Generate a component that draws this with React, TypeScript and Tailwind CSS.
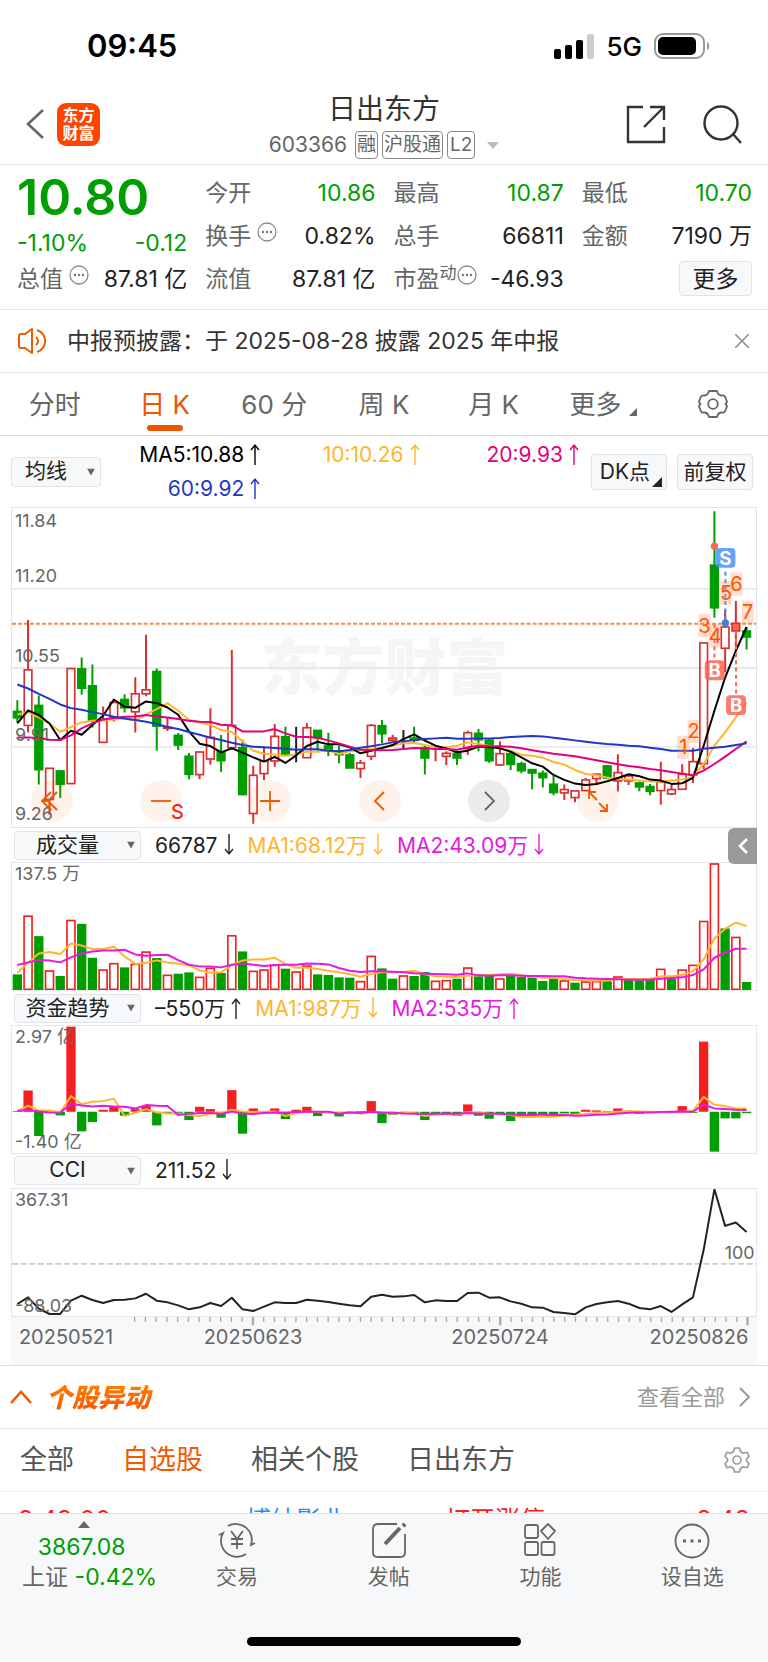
import { useState } from "react";
import type { ReactNode } from "react";

// Every chart shares one horizontal scale: 69 trading days, 3 units to a pixel.
const STEP = 32.26;
const CHART_LEFT = 34;
const CHART_WIDTH = 2238;
const dayX = (i: number) => 50 + i * STEP;

const toPoints = (values: number[]) => values.map((y, i) => `${dayX(i)},${y}`).join(" ");

type CandleKind = "up" | "down" | "flat" | "solid";
type Candle = [CandleKind, number, number, number, number];

// kind, high, low, body top, body bottom
const candles: Candle[] = [
    ["down", 598, 665, 631, 652],
    ["up", 357, 695, 506, 675],
    ["down", 584, 852, 613, 808],
    ["up", 802, 943, 802, 898],
    ["down", 810, 892, 810, 852],
    ["up", 502, 850, 502, 850],
    ["down", 470, 582, 503, 563],
    ["down", 491, 680, 554, 660],
    ["up", 617, 727, 658, 726],
    ["up", 600, 662, 604, 650],
    ["down", 580, 635, 595, 622],
    ["up", 529, 695, 578, 634],
    ["up", 401, 586, 566, 580],
    ["down", 503, 750, 511, 677],
    ["up", 652, 691, 679, 684],
    ["down", 697, 748, 703, 734],
    ["down", 757, 836, 766, 822],
    ["up", 752, 836, 753, 823],
    ["up", 622, 792, 709, 776],
    ["down", 703, 814, 752, 781],
    ["up", 447, 745, 673, 742],
    ["down", 717, 883, 740, 883],
    ["up", 795, 970, 823, 940],
    ["up", 742, 838, 780, 820],
    ["up", 670, 798, 706, 782],
    ["down", 678, 765, 707, 765],
    ["flat", 678, 785, 768, 768],
    ["up", 667, 772, 680, 772],
    ["down", 688, 750, 688, 712],
    ["down", 696, 767, 735, 750],
    ["down", 735, 788, 752, 763],
    ["down", 757, 803, 762, 803],
    ["up", 778, 832, 786, 805],
    ["up", 670, 778, 673, 768],
    ["down", 658, 727, 674, 700],
    ["solid", 702, 722, 711, 721],
    ["flat", 688, 742, 713, 713],
    ["down", 678, 728, 711, 720],
    ["down", 735, 822, 740, 773],
    ["up", 740, 782, 768, 768],
    ["up", 752, 793, 757, 768],
    ["down", 750, 793, 757, 773],
    ["up", 690, 763, 695, 745],
    ["down", 685, 752, 697, 718],
    ["down", 712, 786, 717, 781],
    ["up", 722, 795, 758, 794],
    ["down", 755, 808, 758, 792],
    ["down", 783, 818, 788, 811],
    ["down", 805, 866, 806, 818],
    ["down", 810, 861, 817, 832],
    ["down", 825, 884, 850, 877],
    ["up", 852, 898, 866, 878],
    ["up", 870, 905, 870, 892],
    ["up", 832, 872, 837, 871],
    ["up", 818, 853, 820, 835],
    ["down", 793, 835, 795, 833],
    ["up", 761, 873, 815, 842],
    ["up", 822, 853, 825, 842],
    ["down", 843, 872, 846, 860],
    ["down", 850, 884, 857, 873],
    ["up", 783, 913, 843, 871],
    ["up", 853, 884, 866, 881],
    ["up", 791, 868, 820, 867],
    ["up", 742, 847, 782, 824],
    ["up", 423, 806, 425, 790],
    ["down", 30, 350, 191, 321],
    ["up", 326, 514, 377, 443],
    ["solid", 300, 450, 366, 391],
    ["down", 378, 446, 389, 409],
];

const ma5 = [668, 629, 643, 668, 718, 690, 702, 673, 645, 596, 618, 621, 602, 607, 620, 642, 692, 729, 736, 755, 743, 756, 770, 783, 769, 787, 764, 736, 723, 731, 731, 740, 758, 750, 742, 733, 715, 701, 720, 735, 743, 755, 750, 738, 739, 743, 753, 770, 788, 798, 823, 838, 849, 853, 850, 842, 832, 821, 827, 837, 840, 850, 848, 832, 735, 630, 530, 450, 378];
const ma10 = [641, 634, 650, 668, 693, 679, 665, 660, 658, 656, 653, 660, 641, 625, 607, 630, 657, 665, 672, 688, 694, 722, 750, 759, 762, 765, 761, 753, 753, 749, 760, 752, 747, 746, 741, 735, 728, 727, 733, 738, 740, 735, 725, 730, 736, 740, 750, 762, 765, 771, 784, 792, 808, 820, 824, 831, 835, 837, 840, 843, 843, 840, 837, 828, 790, 735, 695, 650, 605];
const ma20 = [710, 710, 712, 717, 718, 704, 683, 668, 656, 652, 648, 647, 643, 647, 650, 655, 660, 663, 664, 672, 674, 692, 692, 692, 685, 698, 708, 709, 711, 719, 728, 738, 747, 748, 749, 748, 745, 742, 743, 745, 745, 747, 740, 735, 737, 737, 738, 743, 749, 754, 759, 763, 767, 773, 779, 785, 791, 796, 800, 805, 809, 814, 819, 824, 810, 790, 768, 745, 722];
const ma60 = [551, 563, 579, 594, 611, 622, 627, 634, 640, 648, 653, 658, 663, 670, 679, 685, 694, 702, 711, 718, 726, 733, 738, 740, 742, 744, 747, 746, 746, 750, 752, 748, 741, 737, 731, 725, 722, 718, 715, 713, 711, 714, 714, 713, 713, 712, 709, 707, 706, 707, 711, 715, 719, 723, 727, 730, 732, 735, 737, 741, 745, 750, 750, 750, 744, 741, 738, 733, 728];

const volumeTops = [465, 289, 350, 454, 470, 302, 313, 415, 451, 432, 444, 434, 397, 416, 467, 463, 459, 473, 446, 461, 348, 396, 455, 451, 437, 448, 457, 439, 465, 467, 474, 475, 486, 410, 447, 478, 469, 470, 458, 485, 483, 478, 445, 471, 468, 478, 469, 473, 474, 485, 477, 484, 490, 487, 486, 486, 472, 482, 483, 482, 449, 478, 451, 437, 305, 132, 327, 353, 488];
const volumeColors = "grgrgrggrrgrrgrggrrgrgrrrgrrggggrrggrggrrgrggrggggg" + "rgrrgrgggrgrrrrgrg";
const volumeMa1 = [460, 430, 402, 398, 404, 372, 378, 389, 389, 382, 411, 434, 430, 423, 429, 433, 438, 453, 460, 459, 437, 423, 420, 420, 415, 434, 445, 445, 449, 454, 459, 464, 472, 463, 459, 459, 458, 454, 465, 471, 472, 473, 469, 467, 467, 465, 463, 468, 472, 475, 475, 479, 482, 483, 484, 483, 480, 479, 479, 478, 471, 471, 466, 456, 420, 357, 328, 309, 320];
const volumeMa2 = [437, 429, 422, 423, 429, 414, 402, 396, 393, 393, 391, 405, 409, 407, 406, 422, 436, 441, 441, 444, 436, 432, 436, 440, 437, 436, 436, 432, 433, 435, 446, 454, 458, 456, 456, 457, 459, 462, 463, 464, 465, 466, 462, 468, 469, 468, 468, 469, 470, 470, 471, 471, 475, 477, 478, 479, 480, 481, 481, 481, 478, 476, 474, 467, 450, 415, 400, 388, 388];

const flows = [2, 64, -73, -3, -11, 256, -59, -31, 6, 16, -12, 8, 17, -41, -3, -3, -25, 15, 8, -18, 65, -66, 10, 2, 10, -22, 6, 15, -13, -3, -14, -4, 2, 32, -34, -9, -4, -3, -25, -4, -5, -12, 22, -12, -21, -6, -28, -14, -14, -8, -8, -5, -8, 6, 4, 2, 10, 2, -6, -3, -2, 2, 17, -3, 211, -120, -20, -20, -4];
const flowMa1 = [876, 860, 874, 874, 880, 831, 855, 848, 846, 839, 891, 880, 870, 880, 883, 884, 888, 891, 884, 882, 872, 877, 879, 878, 877, 891, 882, 878, 879, 880, 882, 879, 884, 879, 880, 883, 880, 882, 891, 886, 885, 887, 880, 880, 884, 885, 888, 894, 894, 892, 893, 889, 886, 885, 882, 880, 878, 876, 877, 878, 879, 880, 878, 876, 833, 857, 861, 868, 868];
const flowMa2 = [876, 873, 877, 880, 881, 853, 859, 862, 860, 862, 863, 868, 858, 860, 861, 888, 884, 882, 881, 885, 877, 883, 885, 882, 880, 881, 879, 878, 878, 878, 884, 880, 881, 878, 881, 881, 883, 884, 885, 884, 883, 884, 882, 883, 884, 884, 886, 888, 887, 887, 888, 888, 890, 889, 887, 886, 883, 881, 880, 880, 879, 878, 877, 878, 856, 868, 870, 872, 873];

const cci = [463, 443, 477, 493, 493, 453, 438, 451, 460, 451, 450, 446, 432, 453, 458, 467, 479, 473, 460, 469, 444, 479, 484, 471, 458, 460, 460, 450, 453, 457, 462, 467, 470, 441, 435, 441, 440, 436, 458, 452, 454, 454, 430, 429, 444, 443, 455, 462, 473, 474, 487, 490, 494, 473, 463, 458, 454, 462, 475, 479, 469, 487, 464, 443, 300, 118, 228, 218, 246];

const RED = "#d8302f";
const GREEN = "#009e00";

/* ---------- small shared pieces ---------- */

function Arrow({ up = false }: { up?: boolean }) {
    return (
        <svg viewBox="0 0 10 22" className="ml-1.5 inline-block h-[22px] w-[10px] align-[-3px]" fill="none" stroke="currentColor" strokeWidth="1.4">
            {up ? <path d="M5 22V2M1 7l4-5 4 5" /> : <path d="M5 0v20M1 15l4 5 4-5" />}
        </svg>
    );
}

function Dots() {
    return (
        <svg viewBox="0 0 20 20" className="mb-2 ml-1.5 h-5 w-5" fill="none" stroke="#8a8a8a" strokeWidth="1.3">
            <circle cx="10" cy="10" r="9" />
            <g fill="#777" stroke="none">
                <circle cx="6" cy="10" r="1.2" />
                <circle cx="10" cy="10" r="1.2" />
                <circle cx="14" cy="10" r="1.2" />
            </g>
        </svg>
    );
}

function Dropdown({ label, options, className }: { label: string; options: string[]; className: string }) {
    return (
        <div className={`relative rounded border border-[#dfe3ea] bg-[#f7f8fa] ${className}`}>
            <select
                aria-label={label}
                className="block h-full w-full appearance-none bg-transparent pr-5 pb-0.5 text-[21px] leading-none text-[#222] [text-align-last:center]"
            >
                {options.map(o => <option key={o}>{o}</option>)}
            </select>
            <svg viewBox="0 0 8 7" className="pointer-events-none absolute top-1/2 right-[5px] h-[7px] w-2 -translate-y-1/2" fill="#666">
                <path d="M0 0h8L4 7z" />
            </svg>
        </div>
    );
}

/* ---------- top of the page ---------- */

function StatusBar() {
    return (
        <div className="flex h-[88px] items-center justify-between pt-1 pr-[58px] pl-[87px] text-black">
            <span className="text-[31px] font-semibold">09:45</span>
            <div className="flex items-center gap-3">
                <svg viewBox="0 0 40 25" className="h-[25px] w-10">
                    <rect x="0" y="15" width="7" height="10" rx="2" />
                    <rect x="11" y="11" width="7" height="14" rx="2" />
                    <rect x="22" y="6" width="7" height="19" rx="2" />
                    <rect x="33" y="0" width="7" height="25" rx="2" fill="#ccc" />
                </svg>
                <span className="text-[26px] font-medium">5G</span>
                <svg viewBox="0 0 56 26" className="h-[26px] w-14">
                    <rect x="1" y="1" width="49" height="24" rx="8" fill="none" stroke="#999" strokeWidth="2" />
                    <rect x="4" y="4" width="38" height="18" rx="5" />
                    <path d="M53 9c3 1 3 7 0 8z" fill="#999" />
                </svg>
            </div>
        </div>
    );
}

function Header() {
    return (
        <header className="flex h-[77px] items-center justify-between border-b border-[#e6e6e6] px-[26px] pb-1">
            <div className="flex flex-1 items-center gap-3">
                <button aria-label="返回">
                    <svg viewBox="0 0 19 32" className="h-8 w-[19px]" fill="none" stroke="#666" strokeWidth="2.6">
                        <path d="M17 2 2 16l15 14" />
                    </svg>
                </button>
                <div className="flex h-[43px] w-[43px] flex-col items-center justify-center rounded-[9px] bg-[#ff4400] text-[16px] leading-[18px] font-bold text-white">
                    <span>东方</span>
                    <span>财富</span>
                </div>
            </div>
            <div className="flex flex-col items-center">
                <h1 className="text-[28px] leading-10 text-[#333]">日出东方</h1>
                <div className="mt-0.5 flex items-center gap-1 text-[21px] leading-[26px] text-[#666]">
                    <span className="mr-1">603366</span>
                    <span className="rounded border border-[#888] px-px text-[19px]">融</span>
                    <span className="rounded border border-[#888] px-px text-[19px]">沪股通</span>
                    <span className="rounded border border-[#888] px-0.5 text-[19px]">L2</span>
                    <svg viewBox="0 0 12 7" className="ml-2 h-[7px] w-3" fill="#bbb"><path d="M0 0h12L6 7z" /></svg>
                </div>
            </div>
            <div className="flex flex-1 items-center justify-end gap-9">
                <button aria-label="分享">
                    <svg viewBox="0 0 40 40" className="h-10 w-10" fill="none" stroke="#333" strokeWidth="2.4">
                        <path d="M17 3H2v35h36V23M24 3h14v13M38 3 18 23" />
                    </svg>
                </button>
                <button aria-label="搜索">
                    <svg viewBox="0 0 40 40" className="h-10 w-10" fill="none" stroke="#333" strokeWidth="2.4">
                        <circle cx="19" cy="19" r="16.5" />
                        <path d="m31 30 8 9" />
                    </svg>
                </button>
            </div>
        </header>
    );
}

function Quote({ label, value, green = false }: { label: ReactNode; value: string; green?: boolean }) {
    return (
        <div className="flex h-[43px] items-center justify-between">
            <span className="flex items-center text-[#666]">{label}</span>
            <span className={green ? "text-[#009e00]" : "text-[#222]"}>{value}</span>
        </div>
    );
}

function QuotePanel() {
    return (
        <section className="grid grid-cols-4 gap-x-[18px] border-b border-[#e6e6e6] pt-1.5 pr-4 pb-[9px] pl-[17px] text-[23px] leading-7 whitespace-nowrap">
            <div className="text-[#009e00]">
                <div className="h-[52px] text-[50px] leading-[52px] font-semibold">10.80</div>
                <div className="flex h-[34px] items-end justify-between">
                    <span>-1.10%</span>
                    <span>-0.12</span>
                </div>
                <Quote label={<>总值<Dots /></>} value="87.81 亿" />
            </div>
            <div>
                <Quote label="今开" value="10.86" green />
                <Quote label={<>换手<Dots /></>} value="0.82%" />
                <Quote label="流值" value="87.81 亿" />
            </div>
            <div>
                <Quote label="最高" value="10.87" green />
                <Quote label="总手" value="66811" />
                <Quote label={<>市盈<sup className="top-[-6px] text-[17px]">动</sup><span className="-ml-1.5"><Dots /></span></>} value="-46.93" />
            </div>
            <div>
                <Quote label="最低" value="10.70" green />
                <Quote label="金额" value="7190 万" />
                <div className="flex h-[43px] items-center justify-end">
                    <button className="h-[35px] w-[73px] rounded border border-[#dfe3ea] bg-[#f7f8fa] text-[#222]">更多</button>
                </div>
            </div>
        </section>
    );
}

function Notice() {
    return (
        <div className="flex h-[63px] items-center border-b border-[#e6e6e6] px-[17px]">
            <svg viewBox="0 0 32 28" className="h-7 w-8" fill="none" stroke="#f05a00" strokeWidth="2">
                <path d="M2 9v10q0 2 2 2h4l7 5V2L8 7H4q-2 0-2 2z" strokeLinejoin="round" />
                <path d="M19 10a5 5 0 0 1 0 8M20 3a11.500 11.500 0 0 1 0 22" />
            </svg>
            <p className="ml-[18px] flex-1 text-[23px] text-[#333]">中报预披露：于 2025-08-28 披露 2025 年中报</p>
            <button aria-label="关闭">
                <svg viewBox="0 0 14 14" className="mr-0.5 h-3.5 w-3.5" stroke="#888" strokeWidth="1.5"><path d="m0 0 14 14M14 0 0 14" /></svg>
            </button>
        </div>
    );
}

const periods = ["分时", "日K", "60分", "周K", "月K", "更多"];

function PeriodTabs() {
    const [active, setActive] = useState("日K");
    return (
        <nav className="grid h-[63px] grid-cols-7 border-b border-[#d8d8dc] text-[26px] text-[#666]">
            {periods.map(p => (
                <button
                    key={p}
                    onClick={() => setActive(p)}
                    className={p === active ? "relative text-[#ee5500]" : "relative"}
                >
                    {p.replace("K", " K").replace("60", "60 ")}
                    {p === "更多" && (
                        <svg viewBox="0 0 8 8" className="ml-2 inline h-2 w-2 align-[-2px]" fill="#666"><path d="M8 0v8H0z" /></svg>
                    )}
                    {p === active && <span className="absolute bottom-1 left-1/2 h-1.5 w-9 -translate-x-1/2 rounded-full bg-[#ee5500]" />}
                </button>
            ))}
            <button aria-label="图表设置" className="flex items-center justify-center">
                <svg viewBox="0 0 30 30" className="h-[30px] w-[30px]" fill="none" stroke="#666" strokeWidth="1.8" strokeLinejoin="round">
                    <path d="M11 2h8q1 4 4 4.500 3-.5 4 1l2 5q0 1-1.500 2.500 1.500 1.500 1.500 2.500l-2 5q-1 1.500-4 1-3 .5-4 4.500h-8q-1-4-4-4.500-3 .5-4-1l-2-5Q1 16.500 2.500 15 1 13.500 1 12.500l2-5q1-1.500 4-1 3-.5 4-4.500z" />
                    <circle cx="15" cy="15" r="4.800" />
                </svg>
            </button>
        </nav>
    );
}

/* ---------- charts ---------- */

function AverageBar() {
    return (
        <div className="flex h-[71px] items-center pr-[15px] pl-[11px] text-[21px] whitespace-nowrap">
            <Dropdown label="主图指标" options={["均线", "BOLL"]} className="h-[30px] w-[90px]" />
            <div className="grid flex-1 grid-cols-3 text-right leading-[34px]">
                <span className="text-black">MA5:10.88<Arrow up /></span>
                <span className="text-[#ffb52e]">10:10.26<Arrow up /></span>
                <span className="text-[#e3007f]">20:9.93<Arrow up /></span>
                <span className="text-[#1f38c8]">60:9.92<Arrow up /></span>
            </div>
            <button className="relative ml-3 h-9 w-[76px] rounded border border-[#dfe3ea] bg-[#f7f8fa] pr-2 text-[#222]">
                DK点
                <svg viewBox="0 0 10 10" className="absolute right-1 bottom-0.5 h-2.5 w-2.5" fill="#222"><path d="M10 0v10H0z" /></svg>
            </button>
            <button className="ml-2.5 h-9 w-[76px] rounded border border-[#dfe3ea] bg-[#f7f8fa] text-[#222]">前复权</button>
        </div>
    );
}

function CandleShape({ candle, index }: { candle: Candle; index: number }) {
    const [kind, high, low, top, bottom] = candle;
    const x = dayX(index);
    const color = kind === "down" ? GREEN : kind === "flat" ? "#222" : RED;
    const fill = kind === "up" ? "none" : kind === "solid" ? "#ff6450" : color;
    return (
        <g stroke={color} strokeWidth="6">
            <path d={`M${x} ${high}V${top}M${x} ${bottom}V${low}`} />
            <rect x={x - 11.5} y={top + 1} width="23" height={Math.max(bottom - top - 2, 0)} fill={fill} strokeWidth="5" />
        </g>
    );
}

// text, x, y of the digit's middle
const counts: [string, number, number][] = [
    ["1", 2053, 740], ["2", 2084, 692], ["3", 2117, 374], ["4", 2149, 405], ["5", 2182, 275], ["6", 2213, 249], ["7", 2247, 334],
];

const signals: [string, number, number, string][] = [
    ["S", 2180, 170, "#3f8cff"], ["B", 2148, 508, "#ff5a48"], ["B", 2212, 613, "#ff5a48"],
];

function PriceChart() {
    return (
        <svg viewBox={`${CHART_LEFT} 20 ${CHART_WIDTH} 961`} className="block h-auto w-full overflow-visible">
            <text x="1155" y="568" textAnchor="middle" fontSize="186" fontWeight="900" fill="#f5f5f5">东方财富</text>
            <g stroke="#e2e7ee" strokeWidth="5">
                <path d="M34 263H2272M34 501H2272M34 739H2272" />
            </g>
            <path d="M34 368H2272" stroke="#f58a4b" strokeWidth="6" strokeDasharray="12 6" />

            {candles.map((c, i) => <CandleShape key={i} candle={c} index={i} />)}

            <g fill="none" strokeWidth="6" strokeLinejoin="round">
                <polyline points={toPoints(ma10)} stroke="#ffb52e" />
                <polyline points={toPoints(ma5)} stroke="#000" />
                <polyline points={toPoints(ma20)} stroke="#e3007f" />
                <polyline points={toPoints(ma60)} stroke="#1f38c8" />
            </g>

            <g strokeWidth="6" strokeDasharray="12 10">
                <path d="M2180 212V360" stroke="#3f8cff" />
                <path d="M2147 370V480M2212 390V585" stroke="#ff6450" />
            </g>
            <circle cx="2147" cy="135" r="11" fill="#ff6450" />
            <circle cx="2180" cy="366" r="11" fill="#3f7fdf" />
            {signals.map(([text, x, y, color], i) => (
                <g key={i}>
                    <rect x={x - 30} y={y - 30} width="60" height="60" rx="12" fill={color} opacity="0.8" />
                    <text x={x} y={y + 20} textAnchor="middle" fontSize="56" fontWeight="700" fill="#fff">{text}</text>
                </g>
            ))}
            {counts.map(([text, x, y]) => (
                <g key={text}>
                    <rect x={x - 18} y={y - 35} width="36" height="70" fill="#ff8a4a" opacity="0.28" />
                    <text x={x} y={y + 21} textAnchor="middle" fontSize="60" fill="#ff5500">{text}</text>
                </g>
            ))}

            <g fontSize="54" fill="#666">
                <text x="43" y="78">11.84</text>
                <text x="43" y="242">11.20</text>
                <text x="43" y="482">10.55</text>
                <text x="43" y="722">9.91</text>
                <text x="43" y="960">9.26</text>
            </g>
            <text x="532" y="956" textAnchor="middle" fontSize="60" fontWeight="500" fill="#ff1f1f">S</text>
        </svg>
    );
}

const chartControls: { label: string; path: string; gray?: boolean }[] = [
    { label: "最早", path: "M20 12 11 21l9 9M26 12l-9 9 9 9M11 21h8" },
    { label: "缩小", path: "M11 21h20" },
    { label: "放大", path: "M11 21h20M21 11v20" },
    { label: "左移", path: "M25 12l-9 9 9 9" },
    { label: "右移", path: "M17 12l9 9-9 9", gray: true },
    { label: "全屏", path: "M12 19v-7h7M12 12l8 8M23 31h7v-7M30 31l-8-8" },
];

function ChartControls() {
    return (
        <div className="absolute right-[137px] bottom-[5px] left-[19px] flex justify-between">
            {chartControls.map(c => (
                <button
                    key={c.label}
                    aria-label={c.label}
                    className={`h-[42px] w-[42px] rounded-full ${c.gray ? "bg-black/8 text-[#666]" : "bg-[#f05a00]/8 text-[#f05a00]"}`}
                >
                    <svg viewBox="0 0 42 42" className="h-full w-full" fill="none" stroke="currentColor" strokeWidth="1.8">
                        <path d={c.path} />
                    </svg>
                </button>
            ))}
        </div>
    );
}

function VolumeChart() {
    return (
        <svg viewBox={`${CHART_LEFT} 130 ${CHART_WIDTH} 382`} className="block h-auto w-full">
            {volumeTops.map((top, i) => volumeColors[i] === "g"
                ? <rect key={i} x={dayX(i) - 14} y={top} width="28" height={512 - top} fill={GREEN} />
                : <rect key={i} x={dayX(i) - 12} y={top + 1} width="24" height={509 - top} fill="#fff" stroke="#f42020" strokeWidth="5" />
            )}
            <g fill="none" strokeWidth="6" strokeLinejoin="round">
                <polyline points={toPoints(volumeMa1)} stroke="#ffb52e" />
                <polyline points={toPoints(volumeMa2)} stroke="#e518e5" />
            </g>
            <text x="43" y="181" fontSize="54" fill="#666">137.5 万</text>
        </svg>
    );
}

function FlowChart() {
    return (
        <svg viewBox={`${CHART_LEFT} 620 ${CHART_WIDTH} 380`} className="block h-auto w-full">
            {flows.map((v, i) => (
                <rect
                    key={i}
                    x={dayX(i) - 14}
                    y={v > 0 ? 878 - v : 878}
                    width="28"
                    height={Math.abs(v)}
                    fill={v > 0 ? "#f42020" : GREEN}
                />
            ))}
            <g fill="none" strokeWidth="6" strokeLinejoin="round">
                <polyline points={toPoints(flowMa1)} stroke="#ffb52e" />
                <polyline points={toPoints(flowMa2)} stroke="#e518e5" />
            </g>
            <g fontSize="54" fill="#666">
                <text x="43" y="671">2.97 亿</text>
                <text x="43" y="988">-1.40 亿</text>
            </g>
        </svg>
    );
}

function CciChart() {
    return (
        <svg viewBox={`${CHART_LEFT} 117 ${CHART_WIDTH} 382`} className="block h-auto w-full">
            <path d="M34 342H2272" stroke="#ccc" strokeWidth="5" strokeDasharray="18 8" />
            <polyline points={toPoints(cci)} fill="none" stroke="#222" strokeWidth="6" strokeLinejoin="round" />
            <g fontSize="54" fill="#666">
                <text x="43" y="169">367.31</text>
                <text x="43" y="486">-88.03</text>
                <text x="2268" y="328" textAnchor="end">100</text>
            </g>
        </svg>
    );
}

const longTicks = [22, 45, 68];

function DateAxis() {
    const ticks = Array.from({ length: 58 }, (_, i) => i + 11);
    return (
        <svg viewBox={`${CHART_LEFT} 500 ${CHART_WIDTH} 145`} className="block h-auto w-full bg-[#f7f8fa]">
            {ticks.map(i => (
                <path key={i} d={`M${dayX(i)} 500v${longTicks.includes(i) ? 25 : 15}`} stroke="#aaa" strokeWidth={longTicks.includes(i) ? 7 : 4} />
            ))}
            <g fontSize="60" fill="#666" textAnchor="middle">
                <text x="199" y="582">20250521</text>
                <text x="760" y="582">20250623</text>
                <text x="1501" y="582">20250724</text>
                <text x="2098" y="582">20250826</text>
            </g>
        </svg>
    );
}

function IndicatorHead({ name, options, children }: { name: string; options: string[]; children: ReactNode }) {
    return (
        <div className="relative flex h-[34px] items-center gap-3.5 pl-[3px] text-[21px] whitespace-nowrap">
            <Dropdown label={name} options={[name, ...options]} className="h-[29px] w-[127px]" />
            {children}
        </div>
    );
}

function Charts() {
    return (
        <section className="border-b border-[#dcdde2] px-[11px]">
            <div className="relative border border-[#e2e6ec]">
                <PriceChart />
                <ChartControls />
            </div>
            <IndicatorHead name="成交量" options={["MACD", "KDJ"]}>
                <span className="text-[#222]">66787<Arrow /></span>
                <span className="text-[#ffb52e]">MA1:68.12万<Arrow /></span>
                <span className="text-[#e518e5]">MA2:43.09万<Arrow /></span>
                <button aria-label="展开" className="absolute top-0 right-0 flex h-9 w-[29px] items-center justify-center rounded-l-md bg-[#999]">
                    <svg viewBox="0 0 10 16" className="h-4 w-2.5" fill="none" stroke="#fff" strokeWidth="2.6"><path d="M9 1 2 8l7 7" /></svg>
                </button>
            </IndicatorHead>
            <div className="border border-[#e6e7ea]"><VolumeChart /></div>
            <IndicatorHead name="资金趋势" options={["MACD", "KDJ"]}>
                <span className="text-[#222]">–550万<Arrow up /></span>
                <span className="text-[#ffb52e]">MA1:987万<Arrow /></span>
                <span className="text-[#e518e5]">MA2:535万<Arrow up /></span>
            </IndicatorHead>
            <div className="border border-[#e6e7ea]"><FlowChart /></div>
            <IndicatorHead name="CCI" options={["RSI", "WR"]}>
                <span className="text-[#222]">211.52<Arrow /></span>
            </IndicatorHead>
            <div className="border border-[#e6e7ea]"><CciChart /></div>
            <DateAxis />
        </section>
    );
}

/* ---------- unusual moves ---------- */

const moveTabs = ["全部", "自选股", "相关个股", "日出东方"];

function StockMoves() {
    const [active, setActive] = useState("自选股");
    return (
        <section>
            <div className="flex h-[63px] items-center border-b border-[#e9e9ec] pr-[17px] pl-2.5">
                <svg viewBox="0 0 22 14" className="h-3.5 w-[22px]" fill="none" stroke="#f05a00" strokeWidth="2.6"><path d="M1 13 11 2l10 11" /></svg>
                <h2 className="ml-3.5 bg-linear-to-b from-[#ff8800] to-[#ff4400] bg-clip-text pr-1 text-[26px] font-black text-transparent italic">个股异动</h2>
                <a href="#moves" className="ml-auto flex items-center gap-3.5 text-[22px] text-[#999]">
                    查看全部
                    <svg viewBox="0 0 12 20" className="h-5 w-3" fill="none" stroke="#999" strokeWidth="2"><path d="m1 1 9 9-9 9" /></svg>
                </a>
            </div>
            <div className="flex h-[63px] items-center gap-12 border-b border-[#f2f2f4] pr-[18px] pl-5 text-[27px] text-[#555]">
                {moveTabs.map(t => (
                    <button key={t} onClick={() => setActive(t)} className={t === active ? "text-[#f05a00]" : ""}>{t}</button>
                ))}
                <button aria-label="异动设置" className="ml-auto">
                    <svg viewBox="0 0 26 26" className="h-[26px] w-[26px]" fill="none" stroke="#999" strokeWidth="1.6" strokeLinejoin="round">
                        <path d="M10.500 1h5l1 3.500 3 1.700 3.500-1 2 4-2.500 2.800v2l2.500 2.800-2 4-3.500-1-3 1.700-1 3.500h-5l-1-3.500-3-1.700-3.500 1-2-4L3.500 14v-2L1 9.200l2-4 3.500 1 3-1.700z" />
                        <circle cx="13" cy="13" r="4" />
                    </svg>
                </button>
            </div>
            <div className="h-[21px] overflow-hidden">
                <div className="grid grid-cols-[228fr_199fr_150fr_155fr] px-[18px] pt-3 text-[25px] leading-8 text-[#f42020]">
                    <span>9:43:00</span>
                    <span className="text-[#2a8cf0]">博纳影业</span>
                    <span>打开涨停</span>
                    <span className="text-right">8.48</span>
                </div>
            </div>
        </section>
    );
}

/* ---------- bottom bar ---------- */

const actions: { label: string; icon: ReactNode }[] = [
    {
        label: "交易",
        icon: (
            <>
                <path d="M10 4a16 16 0 0 1 23 19l4-2M28 32A16 16 0 0 1 5 11l-4 2" />
                <path d="m13 9 6 8 6-8M13 17h12M13 22h12M19 17v10" />
            </>
        ),
    },
    {
        label: "发帖",
        icon: (
            <>
                <path d="M27 2H8Q3 2 3 7v24q0 4 5 4h22q5 0 5-4V12" />
                <path d="m15 22 15-16M33 4l2-2" strokeWidth="4" />
            </>
        ),
    },
    {
        label: "功能",
        icon: (
            <>
                <rect x="4" y="3" width="13" height="13" rx="2" />
                <rect x="4" y="20" width="13" height="13" rx="2" />
                <rect x="20.500" y="20" width="13" height="13" rx="2" />
                <path d="m27 2 7 7-7 8-7-8z" strokeLinejoin="round" />
            </>
        ),
    },
    {
        label: "设自选",
        icon: (
            <>
                <circle cx="19" cy="19" r="16.500" />
                <path d="M10 19h3M17.500 19h3M25 19h3" strokeWidth="3.200" />
            </>
        ),
    },
];

function BottomBar() {
    return (
        <footer className="border-t border-[#dcdfe4] bg-[#f7f8fa]">
            <div className="flex h-[88px] text-[21px] leading-[30px] text-[#666]">
                <button className="flex w-[21%] flex-col items-center pt-[7px] pl-1.5 text-[23px] whitespace-nowrap">
                    <svg viewBox="0 0 12 7" className="h-[7px] w-3" fill="#666"><path d="M6 0l6 7H0z" /></svg>
                    <span className="mt-1 pr-1 text-[#009e00]">3867.08</span>
                    <span className="pl-3">上证 <span className="text-[#009e00]">-0.42%</span></span>
                </button>
                {actions.map(a => (
                    <button key={a.label} className="flex flex-1 flex-col items-center pt-2">
                        <svg viewBox="0 0 38 38" className="h-[38px] w-[38px]" fill="none" stroke="#666" strokeWidth="1.8">{a.icon}</svg>
                        <span className="mt-0.5">{a.label}</span>
                    </button>
                ))}
            </div>
            <div className="flex h-[59px] items-end justify-center pb-[15px]">
                <div className="h-[9px] w-[274px] rounded-full bg-black" />
            </div>
        </footer>
    );
}

export default function App() {
    return (
        <div className="w-full bg-white font-['Inter','Noto_Sans_CJK_SC',sans-serif]">
            <StatusBar />
            <Header />
            <QuotePanel />
            <Notice />
            <PeriodTabs />
            <AverageBar />
            <Charts />
            <StockMoves />
            <BottomBar />
        </div>
    );
}
